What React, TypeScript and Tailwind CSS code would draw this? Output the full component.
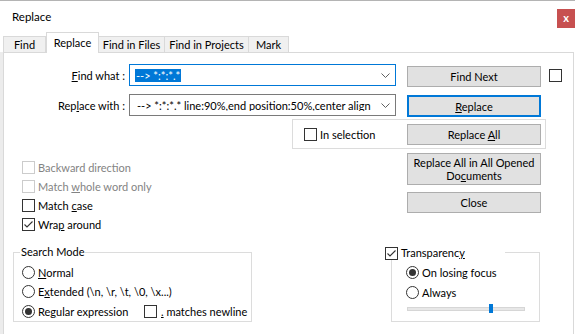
import React from "react";

function Checkbox({ checked = false, disabled = false }: { checked?: boolean; disabled?: boolean }) {
  return (
    <div
      className={
        "w-[13px] h-[13px] shrink-0 border bg-white flex items-center justify-center " +
        (disabled ? "border-[#cccccc]" : "border-[#333333]")
      }
    >
      {checked && (
        <svg width="11" height="11" viewBox="0 0 11 11">
          <polyline points="1.5,5.5 4,8 9.5,2.5" fill="none" stroke="#333333" strokeWidth="1.1" />
        </svg>
      )}
    </div>
  );
}

function Radio({ checked = false }: { checked?: boolean }) {
  return (
    <div className="w-[13px] h-[13px] shrink-0 rounded-full border border-[#333333] bg-white flex items-center justify-center">
      {checked && <div className="w-[7px] h-[7px] rounded-full bg-[#333333]" />}
    </div>
  );
}

function Chevron() {
  return (
    <svg width="9" height="5" viewBox="0 0 9 5" className="shrink-0">
      <polyline points="0.5,0.5 4.5,4.5 8.5,0.5" fill="none" stroke="#606060" strokeWidth="1" />
    </svg>
  );
}

function U({ children }: { children: React.ReactNode }) {
  return <span className="underline underline-offset-1">{children}</span>;
}

export default function App() {
  const btn =
    "w-[134px] shrink-0 bg-[#e1e1e1] border border-[#adadad] flex items-center justify-center text-center";
  return (
    <div className="w-[575px] h-[334px] bg-white overflow-hidden flex flex-col font-['Lato',sans-serif] text-[11px] text-black leading-none border-t border-[#b4b4b4]">
      {/* Title bar */}
      <div className="h-[31px] shrink-0 flex items-start">
        <div className="ml-[12px] mt-[9px] h-[14px] leading-[14px] text-[11.5px]">Replace</div>
        <div className="ml-auto mt-[8px] w-[18px] h-[19px] bg-[#c75050] flex items-center justify-center text-white font-bold text-[11px] leading-none pb-[2px]">
          x
        </div>
      </div>

      {/* Tabs */}
      <div className="h-[20px] shrink-0 flex items-end pl-[3px] relative z-10">
        <div className="w-[43px] h-[16px] border border-b-0 border-[#d9d9d9] bg-[#f0f0f0] flex items-center justify-center">
          Find
        </div>
        <div className="w-[53px] h-[21px] -mb-[1px] border border-b-0 border-[#d9d9d9] bg-white flex items-start justify-center pt-[3px]">
          <span className="h-[14px] leading-[14px]">Replace</span>
        </div>
        <div className="w-[66px] h-[16px] border border-b-0 border-l-0 border-[#d9d9d9] bg-[#f0f0f0] flex items-center justify-center">
          Find in Files
        </div>
        <div className="w-[84px] h-[16px] border border-b-0 border-l-0 border-[#d9d9d9] bg-[#f0f0f0] flex items-center justify-center">
          Find in Projects
        </div>
        <div className="w-[40px] h-[16px] border border-b-0 border-l-0 border-[#d9d9d9] bg-[#f0f0f0] flex items-center justify-center">
          Mark
        </div>
      </div>

      {/* Panel */}
      <div className="flex-1 flex">
        <div className="w-[3px] bg-[#ececec]" />
        <div className="w-[571px] border-t border-l border-r border-[#d9d9d9] flex flex-col pt-[11px]">
          {/* Row 1 */}
          <div className="flex items-start h-[22px]">
            <div className="w-[121px] h-[22px] flex items-center justify-end">
              <span>
                <U>F</U>ind what :
              </span>
            </div>
            <div className="ml-[4px] w-[267px] h-[22px] border border-[#0078d7] flex items-center pl-[5px] pr-[5px]">
              <span className="bg-[#0078d7] text-white h-[13px] leading-[13px] px-[1px] whitespace-nowrap">
                --&gt; *:*:*.*
              </span>
              <div className="ml-auto">
                <Chevron />
              </div>
            </div>
            <div className={btn + " ml-[11px] mt-[2px] h-[21px]"}>Find Next</div>
            <div className="ml-[8px] mt-[5px]">
              <Checkbox />
            </div>
          </div>

          {/* Row 2 */}
          <div className="flex items-start h-[22px] mt-[8px]">
            <div className="w-[121px] h-[22px] flex items-center justify-end">
              <span>
                Rep<U>l</U>ace with :
              </span>
            </div>
            <div className="ml-[4px] w-[267px] h-[22px] border border-[#7a7a7a] flex items-center pl-[7px] pr-[5px]">
              <div className="w-[240px] overflow-hidden whitespace-nowrap">
                --&gt; *:*:*.* line:90%,end position:50%,center align
              </div>
              <div className="ml-auto">
                <Chevron />
              </div>
            </div>
            <div className="w-[134px] shrink-0 bg-[#e1e1e1] border-2 border-[#0078d7] flex items-center justify-center ml-[11px] mt-[1px] h-[22px]">
              <span>
                <U>R</U>eplace
              </span>
            </div>
          </div>

          {/* Row 3 group */}
          <div className="mt-[3px] ml-[288px] w-[254px] h-[30px] border border-[#dcdcdc] flex items-center">
            <div className="ml-[11px]">
              <Checkbox />
            </div>
            <span className="ml-[3px]">
              In select<U>i</U>on
            </span>
            <div className={btn + " ml-auto mr-[4px] h-[21px]"}>
              <span>
                Replace <U>A</U>ll
              </span>
            </div>
          </div>

          {/* Options + buttons */}
          <div className="flex mt-[4px]">
            <div className="w-[403px] pl-[18px] pt-[5px] flex flex-col">
              <div className="h-[19px] flex items-center text-[#838383]">
                <Checkbox disabled />
                <span className="ml-[3px]">Backward direction</span>
              </div>
              <div className="h-[19px] flex items-center text-[#838383]">
                <Checkbox disabled />
                <span className="ml-[3px]">
                  Match <U>w</U>hole word only
                </span>
              </div>
              <div className="h-[19px] flex items-center">
                <Checkbox />
                <span className="ml-[3px]">
                  Match <U>c</U>ase
                </span>
              </div>
              <div className="h-[19px] flex items-center">
                <Checkbox checked />
                <span className="ml-[3px]">
                  Wra<U>p</U> around
                </span>
              </div>
            </div>
            <div className="flex flex-col">
              <div className={btn + " h-[32px] flex-col leading-[13px]"}>
                <span className="whitespace-nowrap">Replace All in All Opened</span>
                <span>
                  Do<U>c</U>uments
                </span>
              </div>
              <div className={btn + " h-[21px] mt-[7px]"}>Close</div>
            </div>
          </div>

          {/* Bottom groups */}
          <div className="flex mt-[18px]">
            <div className="ml-[9px] w-[239px] h-[70px] border border-[#dcdcdc] relative flex flex-col pt-[10px] pl-[8px]">
              <div className="absolute left-[6px] -top-[8px] px-[1px] bg-white h-[14px] leading-[14px]">
                Search Mode
              </div>
              <div className="h-[19.5px] flex items-center">
                <Radio />
                <span className="ml-[3px]">
                  <U>N</U>ormal
                </span>
              </div>
              <div className="h-[19.5px] flex items-center">
                <Radio />
                <span className="ml-[3px]">
                  E<U>x</U>tended (\n, \r, \t, \0, \x...)
                </span>
              </div>
              <div className="h-[19.5px] flex items-center">
                <Radio checked />
                <span className="ml-[3px] w-[106px] whitespace-nowrap">
                  Re<U>g</U>ular expression
                </span>
                <Checkbox />
                <span className="ml-[4px] whitespace-nowrap">
                  <U>.</U> matches newline
                </span>
              </div>
            </div>

            <div className="ml-[139px] w-[149px] h-[70px] border border-[#dcdcdc] relative flex flex-col pt-[10px] pl-[14px]">
              <div className="absolute -left-[7px] -top-[7px] w-[120px] h-[14px] bg-white flex items-center">
                <Checkbox checked />
                <span className="ml-[3px] h-[14px] leading-[14px]">
                  Transparenc<U>y</U>
                </span>
              </div>
              <div className="h-[19.5px] flex items-center">
                <Radio checked />
                <span className="ml-[3px]">On losing focus</span>
              </div>
              <div className="h-[19.5px] flex items-center">
                <Radio />
                <span className="ml-[3px]">Always</span>
              </div>
              <div className="mt-[2px] ml-[1px] relative w-[118px] h-[9px] flex items-center">
                <div className="w-full h-[4px] bg-[#e7e7e7] border border-[#d6d6d6]" />
                <div className="absolute left-[82px] top-0 w-[4px] h-[9px] bg-[#0078d7]" />
              </div>
            </div>
          </div>
        </div>
      </div>
    </div>
  );
}
